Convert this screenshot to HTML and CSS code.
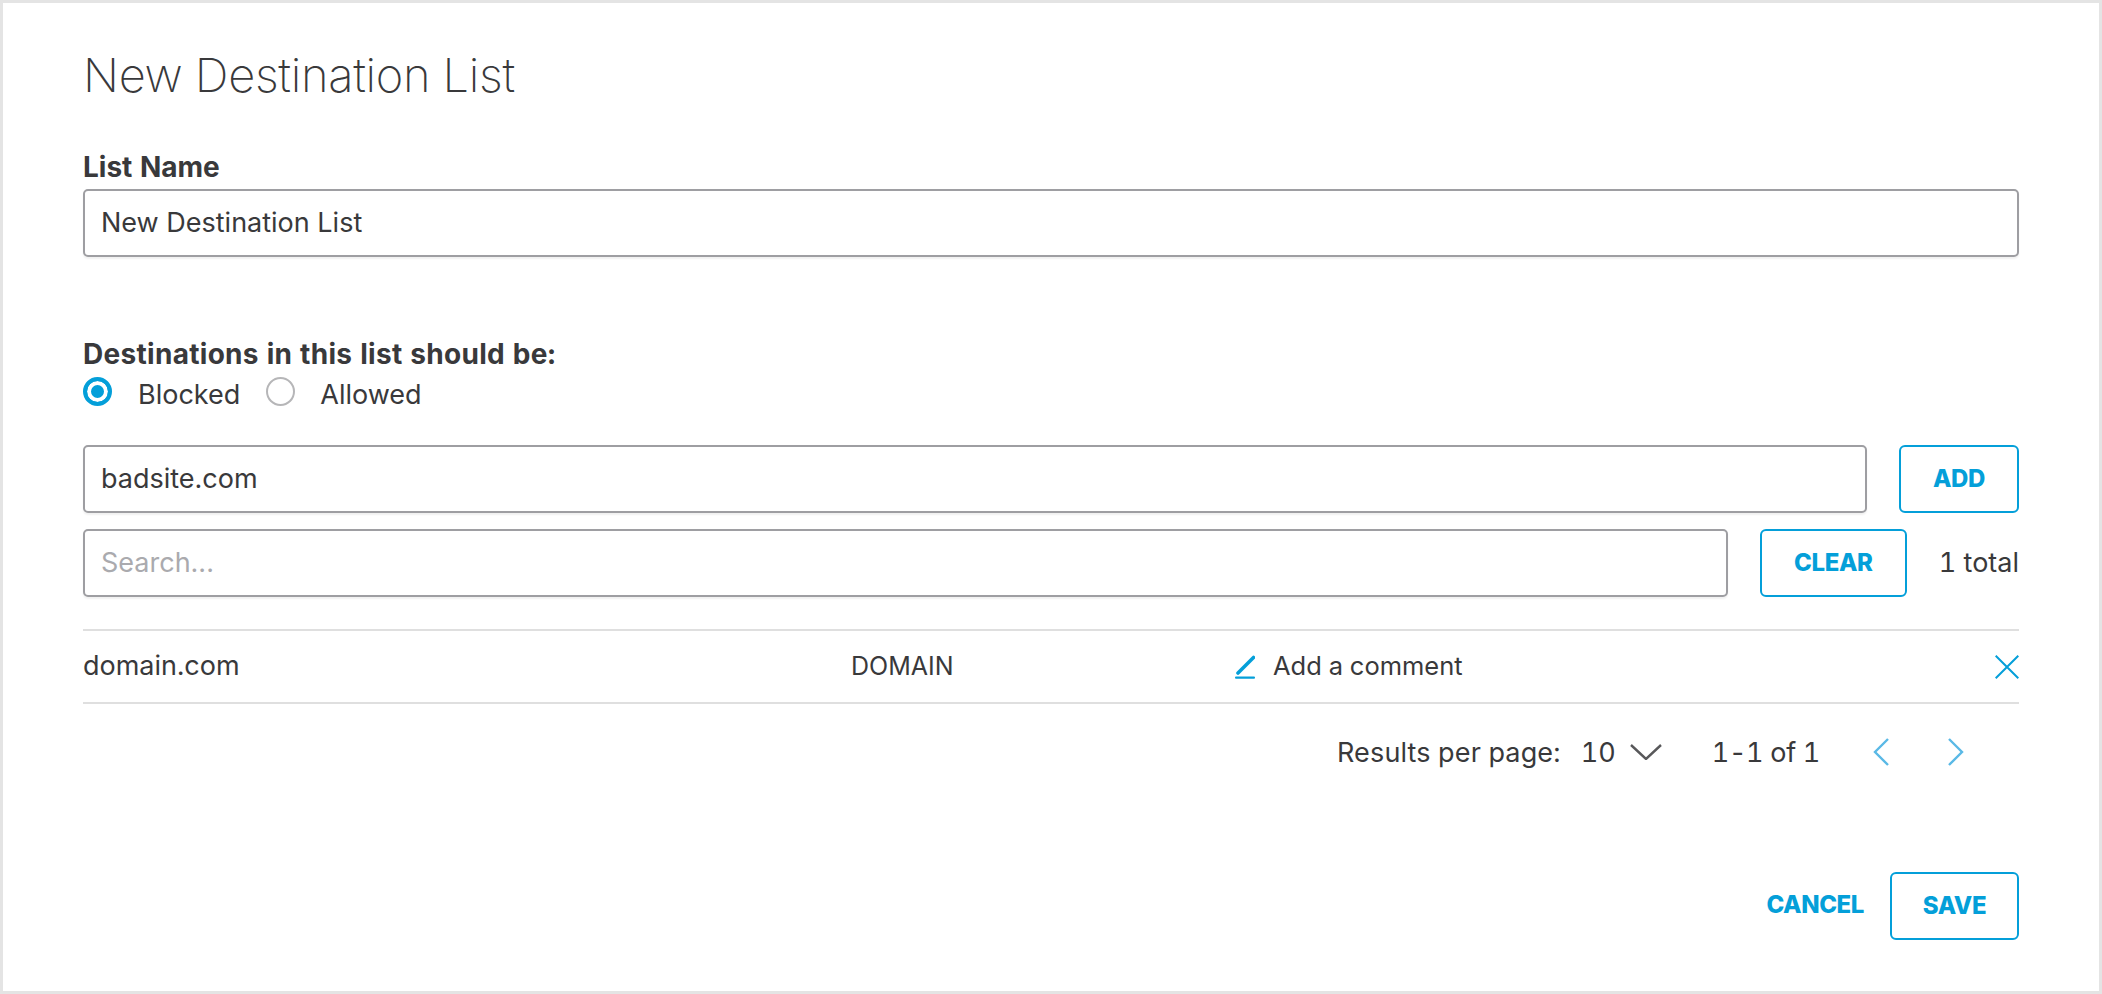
FILE: index.html
```html
<!DOCTYPE html>
<html lang="en">
<head>
<meta charset="utf-8">
<title>New Destination List</title>
<link rel="stylesheet" href="styles.css">
</head>
<body>
<main class="panel">
  <h1 class="title">New Destination List</h1>
  <label class="label label-name" for="list-name">List Name</label>
  <input class="field field-name" id="list-name" type="text" value="New Destination List">

  <div class="label label-dest">Destinations in this list should be:</div>
  <div class="radios">
    <span class="radio radio-on"></span><span class="radio-text">Blocked</span>
    <span class="radio"></span><span class="radio-text">Allowed</span>
  </div>

  <div class="row row-add">
    <input class="field" type="text" value="badsite.com">
    <button class="btn btn-add" type="button">ADD</button>
  </div>
  <div class="row row-search">
    <input class="field" type="text" placeholder="Search...">
    <button class="btn btn-clear" type="button">CLEAR</button>
    <span class="total">1 total</span>
  </div>

  <div class="entry">
    <span class="entry-name">domain.com</span>
    <span class="entry-type">DOMAIN</span>
    <span class="entry-comment">
      <svg class="icon-pencil" viewBox="0 0 20 24" width="20" height="24"><path d="M3 18 L18.5 2.5" stroke="#049fd9" stroke-width="3.6" stroke-linecap="round" fill="none"/><rect x="0" y="21.5" width="20" height="2.2" rx="1" fill="#049fd9"/></svg>
      <span>Add a comment</span>
    </span>
    <svg class="icon-x" viewBox="0 0 24 24" width="24" height="24"><path d="M0.7 0.7 L23.3 23.3 M23.3 0.7 L0.7 23.3" stroke="#049fd9" stroke-width="2" fill="none"/></svg>
  </div>

  <div class="pager">
    <span class="pager-label">Results per page:</span>
    <span class="pager-size">10</span>
    <svg class="icon-down" viewBox="0 0 32 16" width="32" height="16"><path d="M1 1 L16 15 L31 1" stroke="#58585a" stroke-width="2.4" fill="none"/></svg>
    <span class="pager-range">1-1 of 1</span>
    <svg class="icon-prev" viewBox="0 0 16 28" width="16" height="28"><path d="M15 1 L2 14 L15 27" stroke="#5ab9e6" stroke-width="2.4" fill="none"/></svg>
    <svg class="icon-next" viewBox="0 0 16 28" width="16" height="28"><path d="M1 1 L14 14 L1 27" stroke="#5ab9e6" stroke-width="2.4" fill="none"/></svg>
  </div>

  <div class="actions">
    <button class="btn-link" type="button">CANCEL</button>
    <button class="btn btn-save" type="button">SAVE</button>
  </div>
</main>
</body>
</html>
```
FILE: styles.css
```css
* { box-sizing: border-box; }
html, body { margin: 0; height: 100%; background: #fff; }
body {
  font-family: Inter, "Liberation Sans", sans-serif;
  color: #39393b;
  font-size: 27px;
  font-variant-numeric: tabular-nums;
}

.panel {
  height: 994px;
  border: 3px solid #e4e4e4;
  padding: 0 80px;
  display: flex;
  flex-direction: column;
}
.title {
  margin: 44px 0 0;
  font-size: 47px;
  line-height: 56px;
  font-weight: 200;
  letter-spacing: -0.3px;
  color: #39393b;
}
.label { display: block; font-weight: 700; font-size: 28px; line-height: 32px; }
.label-name { margin-top: 48px; }
.label-dest { margin-top: 81px; letter-spacing: 0.3px; }

.field {
  display: block;
  width: 100%;
  height: 68px;
  min-width: 0;
  flex: 1;
  flex-basis: auto;
  padding: 0 16px 2px;
  border: 2px solid #9e9ea2;
  border-radius: 5px;
  box-shadow: 0 2px 2px rgba(0, 0, 0, 0.06);
  font: 400 27px Inter, "Liberation Sans", sans-serif;
  color: #39393b;
  background: #fff;
  outline: none;
}
.field-name { flex: none; margin-top: 6px; }
.field::placeholder { color: #aaaaae; opacity: 1; }

.radios { display: flex; align-items: center; height: 32px; margin-top: 9px; }
.radio { width: 29px; height: 29px; border-radius: 50%; border: 2px solid #b6b6b8; flex: none; margin-top: -8px; margin-right: 25px; }
.radio-on { border: 4px solid #049fd9; background: #049fd9; box-shadow: inset 0 0 0 4px #fff; margin-right: 26px; }
.radio-text { margin-right: 26px; line-height: 32px; }

.row { display: flex; align-items: center; height: 68px; }
.row-add { margin-top: 34px; gap: 32px; }
.row-search { margin-top: 16px; gap: 32px; }

.btn {
  height: 68px;
  padding: 0 0 2px;
  border: 2px solid #049fd9;
  border-radius: 6px;
  background: #fff;
  color: #049fd9;
  font: 800 24px Inter, "Liberation Sans", sans-serif;
  letter-spacing: -0.4px;
  flex: none;
}
.btn-add { width: 120px; }
.btn-clear { width: 147px; }
.btn-save { width: 129px; }
.total { flex: none; line-height: 32px; }

.entry {
  display: grid;
  grid-template-columns: 768px 384px 1fr 24px;
  align-items: center;
  height: 75px;
  margin-top: 32px;
  border-top: 2px solid #dfdfdf;
  border-bottom: 2px solid #dfdfdf;
}
.entry-name, .entry-type { padding-bottom: 2px; }
.entry-type { font-size: 25px; }
.entry-comment { display: flex; align-items: center; gap: 18px; font-size: 25.5px; line-height: 30px; }
.entry-comment span { padding-bottom: 2px; }

.pager { display: flex; align-items: center; justify-content: flex-end; height: 32px; margin-top: 32px; padding-right: 55px; }
.pager-label { letter-spacing: 0.15px; }
.pager-size { margin-left: 20px; }
.icon-down { margin-left: 14px; }
.pager-range { margin-left: 50px; letter-spacing: -0.3px; }
.icon-prev { margin-left: 53px; }
.icon-next { margin-left: 59px; }

.actions { display: flex; align-items: center; justify-content: flex-end; gap: 26px; margin-top: 104px; }
.btn-link { padding: 0 0 4px; border: 0; background: none; color: #049fd9; font: 800 24px Inter, "Liberation Sans", sans-serif; letter-spacing: -0.4px; }
```
